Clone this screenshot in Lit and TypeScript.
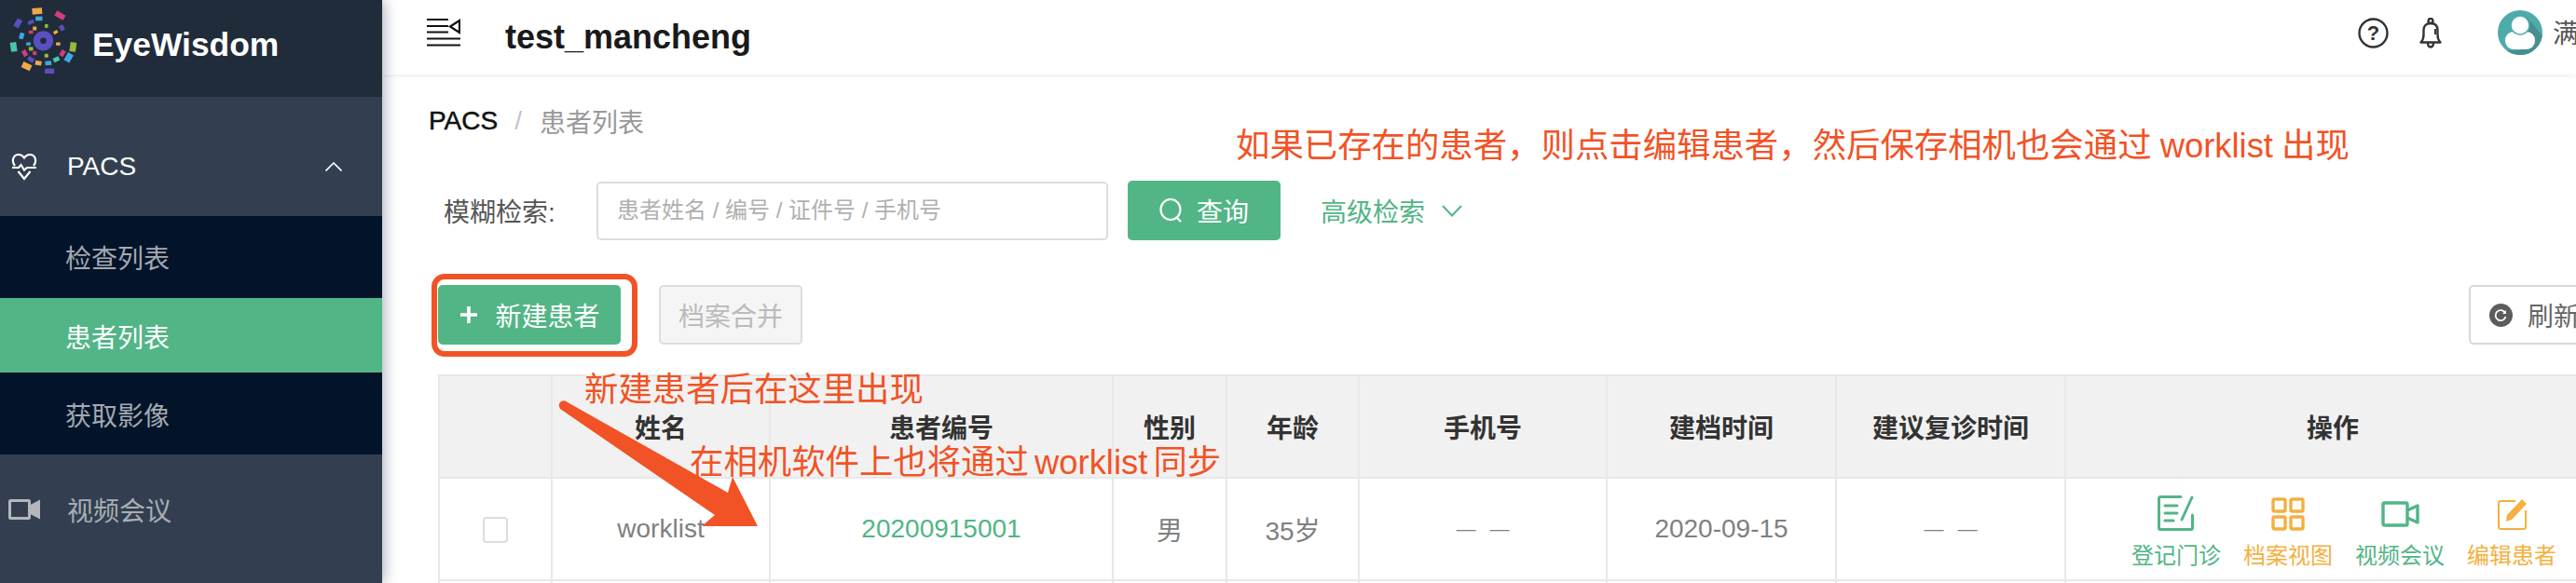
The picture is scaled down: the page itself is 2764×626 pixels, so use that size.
import { LitElement, html, css, svg } from "lit";
import { customElement } from "lit/decorators.js";

const P = "#5a4fc0", O = "#f0a94a", K = "#d63d7d", B = "#3fa9dc", T = "#48c9a5", L = "#9db83c";
const frags: [number, number, number, number, number, string][] = [
  [118, 36, 32, 20, -5, O], [192, 50, 32, 18, 30, K], [56, 75, 18, 28, 30, P], [98, 72, 20, 12, -25, P],
  [124, 60, 22, 14, 0, B], [148, 84, 10, 12, 0, L], [110, 92, 12, 12, 0, O], [98, 104, 14, 10, 0, K],
  [198, 90, 14, 18, -30, P], [178, 104, 14, 10, -30, O], [68, 116, 14, 20, 15, B], [42, 152, 20, 30, -8, T],
  [234, 152, 20, 30, 8, L], [90, 142, 14, 10, 0, B], [186, 142, 14, 10, 0, O], [98, 158, 14, 12, 0, L],
  [78, 172, 14, 20, -30, K], [110, 172, 12, 12, 0, K], [148, 180, 12, 12, 0, L], [200, 172, 14, 20, 30, K],
  [98, 192, 20, 14, 30, P], [122, 204, 20, 14, 10, O], [154, 204, 20, 14, -5, B], [180, 192, 20, 14, -25, T],
  [220, 186, 20, 28, 30, B], [84, 214, 30, 20, 25, O], [158, 230, 30, 16, 0, P],
];

const cols = [121, 234, 368, 122, 142, 266, 246, 246, 574];
const heads = ["", "姓名", "患者编号", "性别", "年龄", "手机号", "建档时间", "建议复诊时间", "操作"];

@customElement("app-root")
export class AppRoot extends LitElement {
  static styles = css`
    :host {
      display: flex;
      position: relative;
      width: 2764px;
      height: 626px;
      overflow: hidden;
      background: #fff;
      font-family: "Liberation Sans", "Noto Sans CJK SC", sans-serif;
      font-size: 28px;
      color: #808080;
    }
    svg { display: block; flex: none; }
    .side {
      flex: none;
      width: 410px;
      height: 626px;
      background: #333f50;
      box-shadow: 2px 0 14px rgba(60, 75, 95, 0.45);
      position: relative;
      z-index: 2;
    }
    .brand {
      height: 104px;
      background: #212c3b;
      display: flex;
      align-items: center;
      padding-left: 2px;
      gap: 14px;
      box-sizing: border-box;
      color: #fff;
      font-weight: 700;
      font-size: 35.4px;
    }
    .brand svg { margin-top: -17px; }
    .brand span { margin-top: -8px; }
    .m1 {
      height: 128px;
      box-sizing: border-box;
      padding: 22px 43px 0 12px;
      display: flex;
      align-items: center;
      color: #fff;
    }
    .m1 span { margin-left: 32px; flex: 1; }
    .sub { background: #03142a; color: #a3a9b1; }
    .s {
      display: flex;
      align-items: center;
      padding-left: 70px;
      height: 88px;
    }
    .s.on { height: 80px; background: #52b586; color: #fff; padding-top: 1px; box-sizing: border-box; }
    .s.last { padding-top: 2px; box-sizing: border-box; }
    .m2 {
      height: 116px;
      box-sizing: border-box;
      padding-left: 9px;
      padding-top: 2px;
      display: flex;
      align-items: center;
      gap: 29px;
      color: #a9aeb5;
    }
    .main { flex: none; width: 2354px; height: 626px; overflow: hidden; }
    .top {
      height: 80px;
      box-sizing: border-box;
      display: flex;
      align-items: center;
      padding: 0 0 10px 48px;
      box-shadow: 0 1px 6px rgba(190, 200, 205, 0.35);
      width: 100%;
    }
    .title { font-size: 36px; font-weight: 700; color: #1a1a1a; margin-left: 48px; flex: 1; margin-top: 10px; }
    .icons { display: flex; align-items: center; flex: none; }
    .help { margin-right: 33px; }
    .bell { margin-right: 60px; }
    .user { margin-left: 11px; width: 25px; overflow: hidden; white-space: nowrap; color: #555; margin-top: -2px; }
    .crumb {
      margin: 30px 0 0 50px;
      height: 40px;
      display: flex;
      align-items: center;
      color: #111;
    }
    .crumb span { -webkit-text-stroke: 0.5px #111; }
    .crumb i { font-style: normal; color: #c0c4cc; margin: 0 19px 0 18px; }
    .crumb em { font-style: normal; color: #999; }
    .search {
      margin: 44px 0 0 66px;
      display: flex;
      align-items: center;
      height: 64px;
      color: #555;
    }
    .search label { width: 164px; }
    .search input {
      width: 549px;
      height: 63px;
      box-sizing: border-box;
      border: 2px solid #ddd;
      border-radius: 5px;
      padding: 0 20px;
      font: 24px "Liberation Sans", "Noto Sans CJK SC", sans-serif;
      outline: none;
      margin-right: 21px;
    }
    .search input::placeholder { color: #b0b0b0; }
    .btn {
      height: 64px;
      box-sizing: border-box;
      display: flex;
      align-items: center;
      justify-content: center;
      border-radius: 5px;
      flex: none;
    }
    .go { background: #52b586; color: #fff; }
    .query { width: 164px; gap: 15px; }
    .adv { margin-left: 43px; color: #52b586; display: flex; align-items: center; gap: 18px; }
    .bar {
      margin: 48px 0 0 60px;
      width: 2319px;
      display: flex;
      align-items: center;
    }
    .add { width: 196px; gap: 19px; padding-left: 2px; }
    .merge { width: 154px; margin-left: 41px; background: #f5f5f5; border: 2px solid #ddd; color: #bbb; }
    .refresh {
      width: 140px;
      margin-left: auto;
      border: 2px solid #d8d8d8;
      color: #666;
      justify-content: flex-start;
      padding-left: 20px;
      gap: 16px;
    }
    .tw { margin: 32px 0 0 60px; }
    table {
      border-collapse: collapse;
      table-layout: fixed;
      width: 2319px;
    }
    td, th {
      border: 2px solid #e8e8e8;
      padding: 0;
      text-align: center;
      height: 110px;
      box-sizing: border-box;
    }
    th { background: #f1f1f1; color: #333; font-weight: 700; font-size: 28px; }
    td { font-size: 28px; }
    .no { color: #52b586; }
    .check {
      display: block;
      width: 27px;
      height: 28px;
      box-sizing: border-box;
      margin: 2px auto 0 auto;
      border: 2px solid #ddd;
      border-radius: 4px;
    }
    td.dash { font-size: 21px; word-spacing: 9px; }
    .ops { display: flex; padding-left: 70px; gap: 24px; }
    .op {
      width: 96px;
      display: flex;
      flex-direction: column;
      align-items: center;
      justify-content: flex-end;
      font-size: 24px;
      height: 88px;
      white-space: nowrap;
      line-height: 30px;
      gap: 12px;
    }
    .g { color: #52b586; }
    .y { color: #f4b040; }
    .note {
      position: absolute;
      z-index: 3;
      color: #f15326;
      font-size: 36.4px;
      line-height: 44px;
      white-space: nowrap;
    }
    .n1 { left: 1326px; top: 135px; word-spacing: -1px; }
    .n2 { left: 627px; top: 397px; }
    .n3 { left: 740px; top: 475px; word-spacing: -4px; }
    .ring {
      position: absolute;
      z-index: 3;
      left: 463px;
      top: 294px;
      width: 221px;
      height: 89px;
      box-sizing: border-box;
      border: 6px solid #f15326;
      border-radius: 14px;
    }
    .arrow { position: absolute; z-index: 3; left: 590px; top: 420px; }
  `;

  private logo() {
    return html`<svg width="83" height="83" viewBox="0 0 250 250">
      <g transform="translate(-4 -6)">
        <circle cx="138" cy="132" r="21" fill="none" stroke="${P}" stroke-width="22" />
        ${frags.map(
          ([x, y, w, h, r, c]) =>
            svg`<rect x="${x - w / 2}" y="${y - h / 2}" width="${w}" height="${h}" fill="${c}" transform="rotate(${r} ${x} ${y})" />`
        )}
      </g>
    </svg>`;
  }

  render() {
    return html`
      <aside class="side">
        <div class="brand">${this.logo()}<span>EyeWisdom</span></div>
        <div class="m1">
          <svg width="28" height="30" viewBox="0 0 28 30" fill="none" stroke="#fff" stroke-width="2.2">
            <path d="M4 14C0 9 2 2 8 2c3 0 5 2 6 3.500C15 4 17 2 20 2c6 0 8 7 4 12" />
            <path d="M1 16h7l2.500-3 3.500 5.500 3-2.500h10" />
            <path d="M7.500 20l6.500 8 6.500-8" />
          </svg>
          <span>PACS</span>
          <svg width="18" height="10" viewBox="0 0 18 10" fill="none" stroke="#fff" stroke-width="1.6"><path d="M0.500 9.500L9 1l8.500 8.500" /></svg>
        </div>
        <div class="sub">
          <div class="s">检查列表</div>
          <div class="s on">患者列表</div>
          <div class="s last">获取影像</div>
        </div>
        <div class="m2">
          <svg width="34" height="22" viewBox="0 0 34 22" fill="none" stroke="#b4b8bd" stroke-width="3">
            <rect x="1.500" y="1.500" width="21" height="19" rx="1" />
            <path d="M23 8l9.500-5v16L23 14z" fill="#b4b8bd" />
          </svg>
          <span>视频会议</span>
        </div>
      </aside>
      <div class="main">
        <header class="top">
          <svg width="36" height="30" viewBox="0 0 36 30" fill="none" stroke="#111" stroke-width="2.200">
            <path d="M0 1h23M0 8h23M0 14.500h23M0 21.500h36M0 28.500h36" />
            <path d="M35 2v13L25 8.500z" />
          </svg>
          <div class="title">test_mancheng</div>
          <div class="icons">
            <svg class="help" width="33" height="33" viewBox="0 0 33 33">
              <circle cx="16.500" cy="16.500" r="15" fill="none" stroke="#333" stroke-width="2.400" />
              <text x="16.500" y="24" text-anchor="middle" font-size="22" font-weight="700" fill="#333" font-family="Liberation Sans">?</text>
            </svg>
            <svg class="bell" width="24" height="33" viewBox="0 0 24 33" fill="none" stroke="#333" stroke-width="2.400">
              <circle cx="12" cy="3.500" r="2.500" />
              <path d="M1.500 26.500c2-2 3-4 3-8v-5c0-5 3-7.500 7.500-7.500s7.500 2.500 7.500 7.500v5c0 4 1 6 3 8z" stroke-linejoin="round" />
              <path d="M9 27c0 6 6 6 6 0" />
              <path d="M17 12v6" stroke-width="2" />
            </svg>
            <svg width="48" height="48" viewBox="0 0 48 48">
              <clipPath id="av"><circle cx="24" cy="24" r="24" /></clipPath>
              <g clip-path="url(#av)">
                <rect width="48" height="48" fill="#4fabaa" />
                <path d="M30 6l22 26v16H24z" fill="#458f8e" />
                <rect x="8" y="23" width="32" height="19" rx="9" fill="#fff" />
                <circle cx="24" cy="16" r="10" fill="#fff" stroke="#4fabaa" stroke-width="1.500" />
                <rect y="43" width="48" height="5" fill="#458f8e" />
              </g>
            </svg>
            <div class="user">满城</div>
          </div>
        </header>
        <div class="crumb"><span>PACS</span><i>/</i><em>患者列表</em></div>
        <div class="search">
          <label>模糊检索:</label>
          <input placeholder="患者姓名 / 编号 / 证件号 / 手机号" />
          <div class="btn go query">
            <svg width="25" height="26" viewBox="0 0 25 26" fill="none" stroke="#fff" stroke-width="2.200">
              <ellipse cx="12" cy="12" rx="10.500" ry="11" />
              <path d="M18 20l5 5" />
            </svg>
            <span>查询</span>
          </div>
          <div class="adv">
            <span>高级检索</span>
            <svg width="22" height="13" viewBox="0 0 22 13" fill="none" stroke="#52b586" stroke-width="2"><path d="M1 1l10 10.500L21 1" /></svg>
          </div>
        </div>
        <div class="bar">
          <div class="btn go add">
            <svg width="18" height="18" viewBox="0 0 18 18" stroke="#fff" stroke-width="3.600"><path d="M9 0v18M0 9h18" /></svg>
            <span>新建患者</span>
          </div>
          <div class="btn merge">档案合并</div>
          <div class="btn refresh">
            <svg width="25" height="25" viewBox="0 0 25 25">
              <circle cx="12.500" cy="12.500" r="12.500" fill="#5c5c5c" />
              <path d="M17 10a5.500 5.500 0 1 0 .5 4" fill="none" stroke="#fff" stroke-width="1.800" />
              <path d="M18 7v4h-4z" fill="#fff" />
            </svg>
            <span>刷新</span>
          </div>
        </div>
        <div class="tw">
          <table>
            <colgroup>${cols.map((w) => html`<col style="width:${w}px" />`)}</colgroup>
            <thead><tr>${heads.map((h) => html`<th>${h}</th>`)}</tr></thead>
            <tbody>
              <tr>
                <td><span class="check"></span></td>
                <td>worklist</td>
                <td class="no">20200915001</td>
                <td>男</td>
                <td>35岁</td>
                <td class="dash">— —</td>
                <td>2020-09-15</td>
                <td class="dash">— —</td>
                <td>
                  <div class="ops">
                    <div class="op g">
                      <svg width="40" height="38" viewBox="0 0 40 38" fill="none" stroke="#52b586" stroke-width="3" stroke-linecap="round">
                        <path d="M25 1.500H3a1.500 1.500 0 0 0-1.500 1.500v32A1.500 1.500 0 0 0 3 36.500h33a1.500 1.500 0 0 0 1.500-1.500V21" />
                        <path d="M8 11h13M8 19h13M8 27h9M26 26L37 2" />
                      </svg>
                      <span>登记门诊</span>
                    </div>
                    <div class="op y">
                      <svg width="36" height="36" viewBox="0 0 36 36" fill="none" stroke="#f4b040" stroke-width="3.400">
                        <rect x="2" y="2" width="13" height="13" rx="1.500" />
                        <rect x="21" y="2" width="13" height="13" rx="1.500" />
                        <rect x="2" y="21" width="13" height="13" rx="1.500" />
                        <rect x="21" y="21" width="13" height="13" rx="1.500" />
                      </svg>
                      <span>档案视图</span>
                    </div>
                    <div class="op g">
                      <svg width="41" height="36" viewBox="0 0 41 36" fill="none" stroke="#52b586" stroke-width="3.400">
                        <rect x="2" y="6" width="26" height="24" rx="1.500" />
                        <path d="M28 14l11-5v18l-11-5" stroke-linejoin="round" />
                      </svg>
                      <span>视频会议</span>
                    </div>
                    <div class="op y">
                      <svg width="36" height="36" viewBox="0 0 36 36" fill="none" stroke="#f4b040" stroke-width="2">
                        <path d="M22 4H6.500A2.500 2.500 0 0 0 4 6.500v25A2.500 2.500 0 0 0 6.500 34h24a2.500 2.500 0 0 0 2.500-2.500V14" />
                        <path d="M29 2l5 5-16 17-6 2 1-7z" fill="#f4b040" stroke="none" />
                      </svg>
                      <span>编辑患者</span>
                    </div>
                  </div>
                </td>
              </tr>
              <tr>${cols.map(() => html`<td></td>`)}</tr>
            </tbody>
          </table>
        </div>
      </div>
      <div class="ring"></div>
      <div class="note n1">如果已存在的患者，则点击编辑患者，然后保存相机也会通过 worklist 出现</div>
      <div class="note n2">新建患者后在这里出现</div>
      <div class="note n3">在相机软件上也将通过 worklist 同步</div>
      <svg class="arrow" width="230" height="150" viewBox="590 420 230 150">
        <path d="M609 432 L781 529 L786 512 L813 565 L753 565 L767 553 L601 439 Q598 434 602 431 Q606 429 609 432Z" fill="#f15326" />
      </svg>
    `;
  }
}
